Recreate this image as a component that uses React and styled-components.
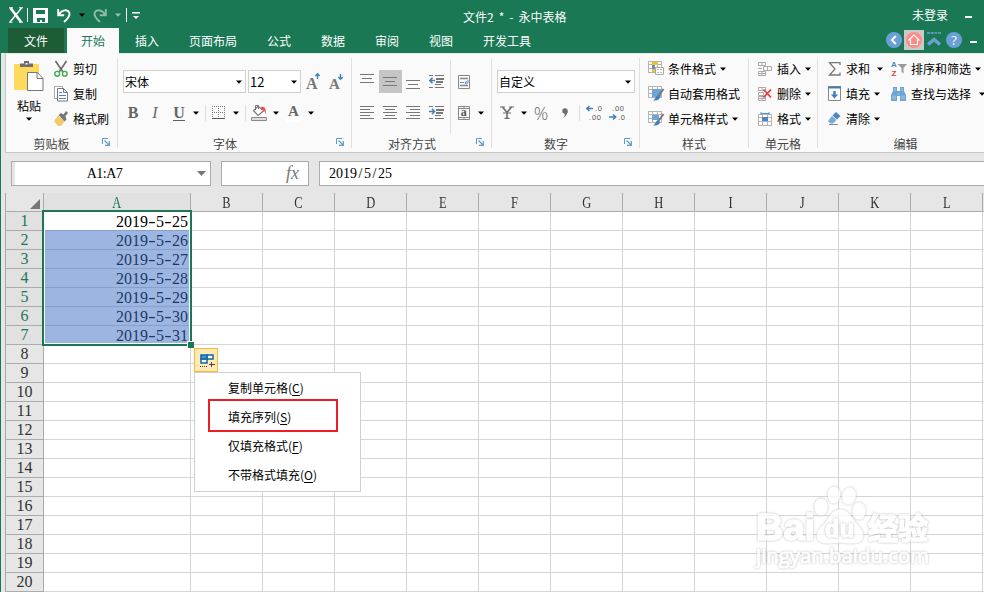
import React from 'react';
import styled, { createGlobalStyle } from 'styled-components';

const GREEN = '#1a7855';
const COLS = ['A', 'B', 'C', 'D', 'E', 'F', 'G', 'H', 'I', 'J', 'K', 'L'];
const TABS = ['插入', '页面布局', '公式', '数据', '审阅', '视图', '开发工具'];
const ROWS = Array.from({ length: 20 }, (_, i) => i + 1);
const MENU = [
    ['复制单元格', 'C'],
    ['填充序列', 'S'],
    ['仅填充格式', 'F'],
    ['不带格式填充', 'O'],
];

const GlobalStyle = createGlobalStyle`
    * { box-sizing: border-box; }
    body {
        margin: 0;
        overflow: hidden;
        font-family: "Noto Sans CJK SC", sans-serif;
        font-size: 12px;
        color: #000;
    }
    svg { display: block; flex: none; overflow: visible; }
`

/* ==============Icons============== */

const Arrow = ({ color = '#000' }) => (
    <svg width="6" height="4" viewBox="0 0 6 4"><path d="M0 .5h6L3 3.8z" fill={color} /></svg>
);

const LogoIcon = () => (
    <svg width="14" height="16" viewBox="0 0 14 16" fill="none" stroke="#fff">
        <path d="M1.5 1L12 15" strokeWidth="2.6" /><path d="M12.5 1L1 15" strokeWidth="1.5" />
        <path d="M0 .8h4M10 .8h4M0 15.2h3.5M10 15.2h4" strokeWidth="1" />
    </svg>
);

const SaveIcon = () => (
    <svg width="15" height="15" viewBox="0 0 15 15">
        <path d="M0 0h15v15H0z" fill="#fff" />
        <path d="M3 2h9v4H3zM4 10h8v4H9v-2H7v2H4z" fill={GREEN} />
    </svg>
);

const UndoIcon = ({ flip, color }) => (
    <svg width="14" height="15" viewBox="0 0 14 15" fill="none" stroke={color} strokeWidth="1.9">
        <g transform={flip ? 'translate(14 0) scale(-1 1)' : undefined}>
            <path d="M1.2 1v6.300h6" /><path d="M1.5 7C5 1.500 10.500 1 12.300 4.500C13.500 8 10.500 11 7 14" />
        </g>
    </svg>
);

const PasteIcon = () => (
    <svg width="30" height="31" viewBox="0 0 30 31">
        <path d="M0 3h25v26H0z" fill="#ffd95c" />
        <path d="M6 6V2.5h4V0h5v2.5h4V6z" fill="#6f6f6f" /><path d="M11.5 2h2v1.5h-2z" fill="#fff" />
        <path d="M13.500 11.500h10l5.500 6v12h-15.500z" fill="#fff" stroke="#777" />
        <path d="M23 11.500v6h6" fill="none" stroke="#777" />
    </svg>
);

const CutIcon = () => (
    <svg width="14" height="16" viewBox="0 0 14 16" fill="none">
        <path d="M1.5 0L9 11M12.5 0L5 11" stroke="#6d6d6d" strokeWidth="1.7" />
        <circle cx="3.2" cy="12.8" r="2.4" stroke="#3fae49" strokeWidth="1.4" />
        <circle cx="10.8" cy="12.8" r="2.4" stroke="#3fae49" strokeWidth="1.4" />
    </svg>
);

const CopyIcon = () => (
    <svg width="14" height="16" viewBox="0 0 14 16">
        <path d="M.5.5h8v12h-8z" fill="#fff" stroke="#aaa" />
        <path d="M3.5 2.5h6l4 4v8.500h-10z" fill="#fff" stroke="#777" />
        <path d="M9.5 2.5v4h4" fill="none" stroke="#777" />
        <path d="M5 6.5h3M5 9.5h7M5 12.5h7" stroke="#4a86c5" />
    </svg>
);

const BrushIcon = () => (
    <svg width="14" height="15" viewBox="0 0 14 15">
        <path d="M0 10l4-5.500 6.500 6-3.500 4.500H4z" fill="#f5c869" />
        <path d="M4.500 4L7 2l2.500 1.500L12 0l2 2-2.500 3 1 3.500-2 2z" fill="#777" />
    </svg>
);

const GrowIcon = ({ down }) => (
    <svg width="14" height="17" viewBox="0 0 14 17">
        <text x="0" y="16" fontFamily="Liberation Serif, serif" fontWeight="bold" fontSize={down ? 15 : 16} fill="#777">A</text>
        <path d={down ? 'M11.500 1v5M9.300 4l2.200 2.300L13.700 4' : 'M11.500 6V1M9.300 3l2.200-2.300L13.700 3'} fill="none" stroke="#3f7fc0" strokeWidth="1.4" />
    </svg>
);

const BorderIcon = () => (
    <svg width="13" height="13" viewBox="0 0 13 13" fill="none" stroke="#777">
        <path d="M0 .5h13M.5 0v12M12.5 0v12M6.5 0v12M0 6.5h13" strokeDasharray="1 1" />
        <path d="M0 12.5h13" stroke="#555" />
    </svg>
);

const BucketIcon = () => (
    <svg width="16" height="17" viewBox="0 0 16 17" fill="none">
        <path d="M7 2.5l6 4-6 5-4.500-5z" fill="#fff" stroke="#777" strokeWidth="1.2" />
        <path d="M4.5 6V1.5h3v3.5" stroke="#777" />
        <path d="M10 3c4-1 5 2 5 8-1-4-2-5-5-5z" fill="#f05050" />
        <path d="M.5 13.5h15v3H.5z" fill="#ddd" stroke="#888" />
    </svg>
);

/* one bar for each [y, x1, x2] */
const Bars = ({ rows }) => (
    <svg width="15" height="15" viewBox="0 0 15 15" stroke="#777">
        {rows.map(([y, a, b]) => <path key={y} d={`M${a} ${y + .5}H${b}`} />)}
    </svg>
);

const IndentIcon = ({ right }) => (
    <svg width="15" height="15" viewBox="0 0 15 15" fill="none">
        <path d="M0 1.5h4M6 1.5h9M6 10.5h6M0 13.5h4M6 13.5h9" stroke="#777" />
        <path d="M7 5h8M7 8h7" stroke="#777" strokeWidth="2" />
        <path d={right ? 'M0 6.5h5M3 3.8l2.500 2.700-2.500 2.700' : 'M6 6.5H1M3.500 3.8L.8 6.500l2.700 2.700'} stroke="#3f7fc0" strokeWidth="1.5" />
    </svg>
);

const WrapIcon = () => (
    <svg width="12" height="14" viewBox="0 0 12 14" fill="none" stroke="#888">
        <path d="M.5.5h11v13H.5z" /><path d="M2 3.5h8M2 10.5h8" strokeWidth="1.5" />
        <path d="M2 7.5h4" stroke="#5b93cc" /><path d="M10 5v3H7M8.500 6.200L6.800 8l1.700 1.500" stroke="#5b93cc" />
    </svg>
);

const MergeIcon = () => (
    <svg width="12" height="14" viewBox="0 0 12 14" fill="none" stroke="#888">
        <path d="M.5.5h11v13H.5zM.5 2.5h11M.5 11.5h11M6 0v2.5M6 11.5V14" />
        <text x="2.8" y="10" fontFamily="Liberation Serif, serif" fontWeight="bold" fontSize="12" fill="#555" stroke="none">a</text>
    </svg>
);

const YenIcon = () => (
    <svg width="14" height="13" viewBox="0 0 14 13" fill="none" stroke="#6d6d6d">
        <path d="M0 1h5M9 1h5" strokeWidth="1.200" />
        <path d="M2.500 1L7 6.500 11.500 1M7 6v6" strokeWidth="1.600" />
        <path d="M3 7h8M4.500 12.300h5" strokeWidth="1.200" />
    </svg>
);

const DecimalIcon = ({ less }) => (
    <svg width="16" height="16" viewBox="0 0 16 16" fontFamily="Liberation Sans, sans-serif" fontSize="7.5" fill="#555">
        <text x={less ? 3 : 9} y="6" textLength={less ? 12 : 7}>{less ? '.00' : '.0'}</text>
        <text x={less ? 9 : 3} y="15" textLength={less ? 7 : 12}>{less ? '.0' : '.00'}</text>
        <path d={less ? 'M0 12h6M4 9.500L6.800 12 4 14.500' : 'M7 3.500H1M3.500 1L.8 3.500l2.700 2.500'} fill="none" stroke="#3f7fc0" strokeWidth="1.5" />
    </svg>
);

const Table = () => (
    <>
        <path d="M0 0h14v12H0z" fill="#fff" />
        <path d="M.5 0v12M4.5 0v12M9.5 0v12M13.5 0v12M0 .5h14M0 3.5h14M0 7.5h14M0 11.5h14" stroke="#b5b5b5" fill="none" />
    </>
);

const CondIcon = () => (
    <svg width="16" height="15" viewBox="0 0 16 15">
        <Table /><path d="M4 1h6v3H4z" fill="#f5c022" /><path d="M4 4h3v4H4z" fill="#5b93cc" /><path d="M4 8h3v3H4z" fill="#f5c022" />
        <path d="M7.5 6.5h8v7h-8z" fill="#fff" stroke="#aaa" /><path d="M9 8.5h2M12 8.5h2M9 11.5h2M12 11.5h2" stroke="#bbb" />
    </svg>
);

const StyleIcon = ({ cell }) => (
    <svg width="16" height="15" viewBox="0 0 16 15">
        <Table /><path d={cell ? 'M4 4h7v5H4z' : 'M4 3h9v8H4z'} fill="#6ea4d6" />
        <path d="M15.5 3L10.500 10" stroke="#777" strokeWidth="2" />
        <path d="M12 10.500c0 3-2.500 4.500-7 4 2.500-1 2.500-4.500 5-5z" fill="#3f7fc0" />
    </svg>
);

const CellsIcon = ({ del }) => (
    <svg width="14" height="14" viewBox="0 0 14 14" fill="#fff" stroke="#aaa">
        <path d="M.5.5h7v3h-7zM.5 9.5h7v4h-7zM.5 11.5h7M4 .5v3M4 9.5v4" />
        {del ? <path d="M.5 5.5h5v3h-5z" /> : <path d="M5.5 4.5h8v4h-8zM9.5 4.5v4M0 6.5h4" />}
        {del && <path d="M5.5 2.5l7.500 8M13 2.5l-7.500 8" stroke="#e8383d" strokeWidth="1.800" />}
    </svg>
);

const FormatIcon = () => (
    <svg width="14" height="14" viewBox="0 0 14 14">
        <g transform="translate(0 2)"><Table /></g>
        <path d="M3 0v3M11 0v3M3 1.5h8" stroke="#5b93cc" /><path d="M4 5h6v4H4z" fill="#4a86c5" />
    </svg>
);

const SumIcon = () => (
    <svg width="13" height="14" viewBox="0 0 13 14" fill="none" stroke="#777" strokeWidth="1.3">
        <path d="M12 3V.7H1.500L7 7l-5.500 6H12v-2.500" />
    </svg>
);

const FillIcon = () => (
    <svg width="13" height="15" viewBox="0 0 13 15" fill="none">
        <path d="M.5.5h12v14H.5z" fill="#fff" stroke="#888" /><path d="M0 1.5h13" stroke="#3f7fc0" strokeWidth="2" />
        <path d="M6.5 5v5" stroke="#3f7fc0" strokeWidth="2.4" /><path d="M2.8 8.5h7.400L6.500 12.500z" fill="#3f7fc0" />
    </svg>
);

const EraserIcon = () => (
    <svg width="13" height="13" viewBox="0 0 13 13">
        <path d="M8 0l4.500 4L9 7.500 4.500 3.500z" fill="#4a86c5" /><path d="M4 4l4.500 4L5 11.500H2.500L0 9z" fill="#76a8da" />
        <path d="M1 12.5h9" stroke="#888" />
    </svg>
);

const SortIcon = () => (
    <svg width="16" height="15" viewBox="0 0 16 15">
        <g fontFamily="Liberation Sans, sans-serif" fontWeight="bold" fontSize="8">
            <text x="0" y="6" fill="#4a86c5">A</text><text x=".5" y="15" fill="#e8383d">Z</text>
        </g>
        <path d="M6.500 3h9.500L12.500 7v5.500l-2-1.500v-4z" fill="#9a9a9a" />
    </svg>
);

const FindIcon = () => (
    <svg width="15" height="14" viewBox="0 0 15 14">
        <path d="M2 0h4v4h3V0h4v4l2 4v6H9V9H6v5H0V8l2-4z" fill="#6ea4d6" />
        <path d="M4 1v3M11 1v3M2 12.500v-4M4 12.500v-4M11 12.500v-4M13 12.500v-4M6.500 7h2" stroke="#d4e4f3" fill="none" strokeWidth=".6" />
    </svg>
);

const LaunchIcon = () => (
    <svg width="8" height="8" viewBox="0 0 8 8" fill="none" stroke="#5b9bd0">
        <path d="M.5 6V.5H6" /><path d="M2.5 2.5l4.500 4.500M7.300 3v4.300H3" strokeWidth="1.200" />
    </svg>
);

const FillOptionsIcon = () => (
    <svg width="15" height="14" viewBox="0 0 15 14" fill="none">
        <path d="M7 1h6v4H7zM1 5h6v4H1z" fill="#fff" stroke="#0f68a8" strokeWidth="1.500" />
        <path d="M1 1h6v4H1z" fill="#4d92c4" stroke="#0f68a8" strokeWidth="1.500" />
        <path d="M0 12.5h8" stroke="#444" strokeDasharray="1 1" /><path d="M9 10.5h6M11.500 8v5" stroke="#444" />
    </svg>
);

/* ==============Small parts============== */

const ToolButton = ({ icon, text, arrow, gap = 4, iconW = 15 }) => (
    <Tool>
        <IconBox $w={iconW}>{icon}</IconBox>
        <span>{text}</span>
        {arrow && <ArrowBox $gap={gap}><Arrow /></ArrowBox>}
    </Tool>
);

const RibbonGroup = ({ width, title, space = 0, launch, children }) => (
    <Group $w={width}>
        <GroupBody>{children}</GroupBody>
        <GroupTitle $space={space}>
            {title}
            {launch && <Launch><LaunchIcon /></Launch>}
        </GroupTitle>
    </Group>
);

// separators take the same advance as a digit
const DateText = ({ value, step }) => (
    <>
        {value.split(/([-/])/).map((part, i) => (
            i % 2 ? <Sep key={i} $w={step} $wide={part === '-'}>{part}</Sep> : part
        ))}
    </>
);

const Watermark = () => (
    <MarkBox>
        <svg width="180" height="90" viewBox="0 0 180 90" fill="#fff" stroke="#fff" strokeWidth="1.6" strokeLinejoin="round">
            <g fontFamily="Liberation Sans, sans-serif" fontWeight="bold">
                <text x="2" y="55" fontSize="37" textLength="59" lengthAdjust="spacingAndGlyphs">Bai</text>
                <ellipse cx="67" cy="22" rx="6" ry="8" /><ellipse cx="80" cy="10" rx="5.500" ry="8" />
                <ellipse cx="95" cy="11" rx="6" ry="8" transform="rotate(15 95 11)" /><ellipse cx="105" cy="26" rx="6" ry="8" />
                <path d="M86 25c8 0 11 8 16 14 5 5 8 9 6 14-3 7-12 4-22 4s-18 3-22-3c-2-6 2-11 7-15 5-6 7-14 15-14z" />
                <text x="71" y="52" fontSize="23" textLength="29">du</text>
            </g>
            <text x="114" y="54" fontSize="30" fontWeight="bold" fontFamily="Noto Sans CJK SC, sans-serif">经验</text>
            <text x="2" y="78" fontSize="20" strokeWidth="1" fontFamily="Open Sans, sans-serif" textLength="173" lengthAdjust="spacingAndGlyphs">jingyan.baidu.com</text>
        </svg>
    </MarkBox>
);

const App = () => {
    return (
        <Window>
            <GlobalStyle />

            {/* ==============Title============== */}
            <TitleBar>
                <QuickAccess>
                    <LogoIcon /><QuickLine /><SaveIcon />
                    <QuickItem $gap={9}><UndoIcon color="#fff" /></QuickItem>
                    <QuickItem $gap={8}><Arrow /></QuickItem>
                    <QuickItem $gap={8}><UndoIcon flip color="#8fb9a9" /></QuickItem>
                    <QuickItem $gap={8}><Arrow color="#a9bdb5" /></QuickItem>
                    <QuickItem $gap={1}><QuickLine /></QuickItem>
                    <svg width="8" height="7" viewBox="0 0 8 7"><path d="M0 0h8v1.5H0zM1 4h6L4 7z" fill="#fff" /></svg>
                </QuickAccess>
                <Title>文件2 * - 永中表格</Title>
                <Account>未登录<Minus /></Account>
            </TitleBar>

            {/* ==============Tabs============== */}
            <TabBar>
                <FileTab>文件</FileTab>
                <ActiveTab>开始</ActiveTab>
                {TABS.map((t) => <Tab key={t}>{t}</Tab>)}
                <TabTools>
                    <svg width="16" height="16" viewBox="0 0 16 16">
                        <circle cx="8" cy="8" r="8" fill="#6ba0d6" /><path d="M9.8 4L6 8l3.800 4" fill="none" stroke="#fff" strokeWidth="2" />
                    </svg>
                    <HomeBox>
                        <svg width="16" height="16" viewBox="0 0 16 16">
                            <circle cx="8" cy="8" r="8" fill="#ff8a8a" />
                            <path d="M2.8 8L8 3l5.200 5H11.500v4.500h-7V8z" fill="none" stroke="#fff" strokeWidth="1.100" />
                        </svg>
                    </HomeBox>
                    <svg width="14" height="16" viewBox="0 0 14 16" fill="none" stroke="#6ba0d6">
                        <path d="M0 1h14" strokeWidth="1.5" strokeDasharray="3 .7" /><path d="M1 12.500L7 7.500l6 5" strokeWidth="3.500" />
                    </svg>
                    <HelpDot>?</HelpDot>
                    <Minus $low />
                </TabTools>
            </TabBar>

            {/* ==============Ribbon============== */}
            <Ribbon>
                <RibbonGroup width={112} title="剪贴板" space={20} launch>
                    <PasteButton><PasteIcon /><PasteText>粘贴</PasteText><Arrow /></PasteButton>
                    <Stack $gap={8}>
                        <ToolButton icon={<CutIcon />} text="剪切" iconW={19} />
                        <ToolButton icon={<CopyIcon />} text="复制" iconW={19} />
                        <ToolButton icon={<BrushIcon />} text="格式刷" iconW={19} />
                    </Stack>
                </RibbonGroup>

                <RibbonGroup width={234} title="字体" space={19} launch>
                    <Lines $left={5}>
                        <Line>
                            <Select $w={123}>宋体<Arrow /></Select>
                            <Select $w={53} $ml={2} $big>12<Arrow /></Select>
                            <Slot $w={24}><GrowIcon /></Slot>
                            <Slot $w={22}><GrowIcon down /></Slot>
                        </Line>
                        <Line>
                            <Slot $w={20}><Letter>B</Letter></Slot>
                            <Slot $w={24}><Letter $italic>I</Letter></Slot>
                            <Slot $w={24}><Letter $under>U</Letter></Slot>
                            <Slot $w={10}><Arrow /></Slot>
                            <Slot $w={8}><Divider $h={16} /></Slot>
                            <Slot $w={19}><BorderIcon /></Slot>
                            <Slot $w={16}><Arrow /></Slot>
                            <Slot $w={3}><Divider $h={16} /></Slot>
                            <Slot $w={24}><BucketIcon /></Slot>
                            <Slot $w={10}><Arrow /></Slot>
                            <Slot $w={25}><Letter $bar>A</Letter></Slot>
                            <Slot $w={10}><Arrow /></Slot>
                        </Line>
                    </Lines>
                </RibbonGroup>

                <RibbonGroup width={140} title="对齐方式" space={19} launch>
                    <Lines $left={4}>
                        <Line>
                            <Slot $w={23}><Bars rows={[[0, 0, 14], [4, 2, 12], [8, 0, 14]]} /></Slot>
                            <Slot $w={23} $on><Bars rows={[[3, 0, 14], [7, 2, 12], [11, 0, 14]]} /></Slot>
                            <Slot $w={23}><Bars rows={[[6, 0, 14], [10, 2, 12], [14, 0, 14]]} /></Slot>
                            <Slot $w={22}><IndentIcon /></Slot>
                        </Line>
                        <Line>
                            <Slot $w={23}><Bars rows={[[1, 0, 14], [4, 0, 10], [7, 0, 14], [10, 0, 10], [13, 0, 14]]} /></Slot>
                            <Slot $w={23}><Bars rows={[[1, 0, 14], [4, 2, 12], [7, 0, 14], [10, 2, 12], [13, 0, 14]]} /></Slot>
                            <Slot $w={23}><Bars rows={[[1, 0, 14], [4, 4, 14], [7, 0, 14], [10, 4, 14], [13, 0, 14]]} /></Slot>
                            <Slot $w={22}><IndentIcon right /></Slot>
                        </Line>
                    </Lines>
                    <TallDivider />
                    <Lines $left={1}>
                        <Line><Slot $w={24}><WrapIcon /></Slot></Line>
                        <Line><Slot $w={24}><MergeIcon /></Slot><Slot $w={10}><Arrow /></Slot></Line>
                    </Lines>
                </RibbonGroup>

                <RibbonGroup width={148} title="数字" space={19} launch>
                    <Lines $left={5}>
                        <Line><Select $w={138}>自定义<Arrow /></Select></Line>
                        <Line>
                            <Slot $w={20}><YenIcon /></Slot>
                            <Slot $w={14}><Arrow /></Slot>
                            <Slot $w={20}><Percent>%</Percent></Slot>
                            <Slot $w={28}>
                                <svg width="6" height="10" viewBox="0 0 6 10"><circle cx="3" cy="3" r="2.7" fill="#6d6d6d" /><path d="M5.7 3c0 3-2 5.500-4.700 7 2-2.500 2-3 1.500-5z" fill="#6d6d6d" /></svg>
                            </Slot>
                            <Divider $h={16} />
                            <Slot $w={27}><DecimalIcon /></Slot>
                            <Slot $w={19}><DecimalIcon less /></Slot>
                        </Line>
                    </Lines>
                </RibbonGroup>

                <RibbonGroup width={109} title="样式">
                    <Stack $gap={8}>
                        <ToolButton icon={<CondIcon />} text="条件格式" iconW={20} arrow />
                        <ToolButton icon={<StyleIcon />} text="自动套用格式" iconW={20} />
                        <ToolButton icon={<StyleIcon cell />} text="单元格样式" iconW={20} arrow />
                    </Stack>
                </RibbonGroup>

                <RibbonGroup width={69} title="单元格">
                    <Stack $gap={9}>
                        <ToolButton icon={<CellsIcon />} text="插入" iconW={19} arrow />
                        <ToolButton icon={<CellsIcon del />} text="删除" iconW={19} arrow />
                        <ToolButton icon={<FormatIcon />} text="格式" iconW={19} arrow />
                    </Stack>
                </RibbonGroup>

                <RibbonGroup width={176} title="编辑">
                    <Stack $gap={10}>
                        <ToolButton icon={<SumIcon />} text="求和" iconW={18} arrow gap={7} />
                        <ToolButton icon={<FillIcon />} text="填充" iconW={18} arrow />
                        <ToolButton icon={<EraserIcon />} text="清除" iconW={18} arrow />
                    </Stack>
                    <Stack $gap={8}>
                        <ToolButton icon={<SortIcon />} text="排序和筛选" iconW={20} arrow />
                        <ToolButton icon={<FindIcon />} text="查找与选择" iconW={20} arrow gap={8} />
                    </Stack>
                </RibbonGroup>
            </Ribbon>

            {/* ==============Formula============== */}
            <FormulaBar>
                <NameBox>
                    <NameText>A1:A7</NameText>
                    <svg width="9" height="5" viewBox="0 0 9 5"><path d="M0 0h9L4.500 5z" fill="#777" /></svg>
                </NameBox>
                <FxBox>fx</FxBox>
                <FormulaInput><DateText value="2019/5/25" step={7} /></FormulaInput>
            </FormulaBar>

            {/* ==============Sheet============== */}
            <Sheet>
                <Corner><svg width="10" height="10" viewBox="0 0 10 10"><path d="M10 0v10H0z" fill="#777" /></svg></Corner>
                {COLS.map((c, i) => <ColHead key={c} $on={i === 0}><span>{c}</span></ColHead>)}
                <Spare $head />
                {ROWS.map((r) => (
                    <React.Fragment key={r}>
                        <RowHead $on={r <= 7}>{r}</RowHead>
                        {COLS.map((c, i) => (
                            <Cell key={c}>{i === 0 && r <= 7 && <DateText value={`2019-5-${24 + r}`} step={8} />}</Cell>
                        ))}
                        <Spare />
                    </React.Fragment>
                ))}
                <Selection><Shade /><Handle /></Selection>
            </Sheet>

            <FillOptions>
                <FillButton><FillOptionsIcon /></FillButton>
                <FillMenu>
                    {MENU.map(([text, key]) => <MenuItem key={key}>{text}(<u>{key}</u>)</MenuItem>)}
                    <RedFrame />
                </FillMenu>
            </FillOptions>
            <Watermark />
        </Window>
    );
}

const Window = styled.div`
    position: relative;
    width: 984px;
    height: 592px;
    overflow: hidden;
    background: #e6e6e6;
    border-left: 1px solid ${GREEN};
    line-height: 16px;
`

const TitleBar = styled.div`
    height: 28px;
    display: grid;
    grid-template-columns: 462px 1fr 73px;
    align-items: center;
    padding-top: 2px;
    background: ${GREEN};
    color: #fff;
`

const QuickAccess = styled.div`
    display: flex;
    align-items: center;
    padding-left: 8px;
`

const QuickLine = styled.div`
    width: 1px;
    height: 14px;
    margin: 0 5px 0 4px;
    background: #fff;
`

const QuickItem = styled.div`
    margin-left: ${(p) => p.$gap}px;
`

const Title = styled.div`
    padding-top: 3px;
    white-space: pre;
    word-spacing: 2.3px;
`

const Account = styled.div`
    display: flex;
    align-items: center;
    padding-left: 1px;
`

const Minus = styled.div`
    width: 7px;
    height: 2px;
    background: #fff;
    margin: ${(p) => (p.$low ? '4px 0 0 8px' : '4px 0 0 17px')};
`

const TabBar = styled.div`
    height: 25px;
    display: flex;
    padding-left: 7px;
    background: ${GREEN};
    color: #fff;
`

const Tab = styled.div`
    padding: 5px 15px 0;
    height: 25px;
`

const FileTab = styled(Tab)`
    width: 56px;
    padding: 5px 16px 0;
    background: #1e5c36;
`

const ActiveTab = styled(Tab)`
    width: 52px;
    height: 26px;
    padding: 5px 14px 0;
    margin: 0 1px 0 3px;
    background: #fafafa;
    color: ${GREEN};
    z-index: 1;
`

const TabTools = styled.div`
    flex: 1;
    display: flex;
    align-items: center;
    justify-content: flex-end;
    padding: 0 7px 2px 0;
`

const HomeBox = styled.div`
    padding: 2px;
    margin: 0 3px 0 2px;
    background: #c9c9c9;
`

const HelpDot = styled.div`
    width: 16px;
    height: 16px;
    margin-left: 5px;
    border-radius: 50%;
    background: #6ba0d6;
    font: 13px/16px "Open Sans", sans-serif;
    text-align: center;
`

const Ribbon = styled.div`
    display: flex;
    width: 990px;
    height: 100px;
    margin-left: 4px;
    border: 1px solid #c6c6c6;
    border-top-color: #e8e8e8;
    background: #fafafa;
`

const Group = styled.div`
    flex: none;
    width: ${(p) => p.$w}px;
    height: 90px;
    margin-top: 4px;
    border-right: 1px solid #e0e0e0;
`

const GroupBody = styled.div`
    display: flex;
    height: 76px;
`

const GroupTitle = styled.div`
    position: relative;
    height: 16px;
    padding: 2px ${(p) => p.$space}px 0 0;
    text-align: center;
    color: #444;
`

const Launch = styled.div`
    position: absolute;
    right: 7px;
    top: 4px;
`

const PasteButton = styled.div`
    width: 40px;
    padding: 3px 0 0 8px;
    display: flex;
    flex-direction: column;

    > svg:last-child { margin: 3px 0 0 12px; }
`

const PasteText = styled.span`
    margin: 6px 0 0 3px;
`

const Stack = styled.div`
    padding-left: ${(p) => p.$gap}px;
    margin-top: -2px;
`

const Tool = styled.div`
    height: 25px;
    display: flex;
    align-items: center;
    white-space: nowrap;
`

const IconBox = styled.div`
    width: ${(p) => p.$w}px;
`

const ArrowBox = styled.div`
    margin-left: ${(p) => p.$gap}px;
`

const Lines = styled.div`
    padding: 12px 0 0 ${(p) => p.$left}px;
`

const Line = styled.div`
    height: 23px;
    margin-bottom: 8px;
    display: flex;
    align-items: center;
`

const Slot = styled.div`
    width: ${(p) => p.$w}px;
    height: 23px;
    display: flex;
    align-items: center;
    justify-content: center;
    background: ${(p) => (p.$on ? '#c5c5c5' : 'none')};
`

const Select = styled.div`
    width: ${(p) => p.$w}px;
    height: 23px;
    margin-left: ${(p) => p.$ml || 0}px;
    padding: 0 3px 0 1px;
    display: flex;
    align-items: center;
    justify-content: space-between;
    border: 1px solid #d0d0d0;
    background: #fff;
    font-size: ${(p) => (p.$big ? 13 : 12)}px;
`

const Letter = styled.span`
    font-family: "Liberation Serif", serif;
    font-size: ${(p) => (p.$bar ? 15 : 16)}px;
    line-height: 15px;
    font-weight: ${(p) => (p.$italic ? 'normal' : 'bold')};
    font-style: ${(p) => (p.$italic ? 'italic' : 'normal')};
    color: #666;
    border-bottom: ${(p) => (p.$under ? '1px solid #5f5f5f' : p.$bar ? '3px solid #fff' : 'none')};
    padding: 0 ${(p) => (p.$bar ? 2 : 0)}px;
`

const Percent = styled.span`
    font: 300 18px/20px "Open Sans", sans-serif;
    color: #666;
`

const Divider = styled.div`
    width: 1px;
    height: ${(p) => p.$h}px;
    background: #ddd;
`

const TallDivider = styled.div`
    width: 1px;
    height: 74px;
    margin: 2px 0 0 3px;
    background: #e0e0e0;
`

const FormulaBar = styled.div`
    height: 40px;
    padding: 8px 0 0 10px;
    display: flex;
    font: 14px/16px "Liberation Serif", serif;
`

const NameBox = styled.div`
    width: 200px;
    height: 25px;
    padding-right: 4px;
    display: flex;
    align-items: center;
    border: 1px solid #ababab;
    box-shadow: inset 3px 0 #e6e6e6;
    background: #fff;
`

const NameText = styled.span`
    flex: 1;
    text-align: center;
    letter-spacing: -.5px;
`

const FxBox = styled.div`
    width: 88px;
    height: 25px;
    margin: 0 10px;
    padding: 3px 9px 0;
    border: 1px solid #ababab;
    background: #fff;
    color: #777;
    font-size: 18px;
    font-style: italic;
    text-align: right;
`

const FormulaInput = styled.div`
    flex: 1;
    height: 25px;
    padding: 4px 9px 0;
    border: 1px solid #ababab;
    border-right: 0;
    background: #fff;
`

const Sep = styled.span`
    display: inline-block;
    width: ${(p) => p.$w}px;
    text-align: center;
    transform: ${(p) => (p.$wide ? 'scaleX(1.4)' : 'none')};
`

const Sheet = styled.div`
    position: relative;
    display: grid;
    grid-template-columns: 38px 147px repeat(11, 72px) 8px;
    grid-template-rows: 19px repeat(20, 19px);
    width: 985px;
    margin-left: 4px;
    border-left: 1px solid #ababab;
    background: #fff;
    font: 16px/18px "Liberation Serif", serif;
`

const Corner = styled.div`
    display: flex;
    justify-content: flex-end;
    align-items: center;
    padding: 3px 3px 0 0;
    border-right: 1px solid #ababab;
    border-bottom: 1px solid #ababab;
    background: #e6e6e6;
`

const ColHead = styled.div`
    text-align: center;
    padding-top: 1px;
    background: ${(p) => (p.$on ? '#e1e1e1' : '#e6e6e6')};
    border-right: 1px solid #ababab;
    border-bottom: 1px solid #ababab;
    color: ${(p) => (p.$on ? GREEN : '#333')};

    span {
        display: inline-block;
        transform: scaleX(.78);
    }
`

const RowHead = styled.div`
    text-align: center;
    background: ${(p) => (p.$on ? '#e1e1e1' : '#e6e6e6')};
    border-right: 1px solid #ababab;
    border-bottom: 1px solid #ababab;
    color: ${(p) => (p.$on ? GREEN : '#333')};
`

const Cell = styled.div`
    padding: 1px 2px 0 0;
    text-align: right;
    border-right: 1px solid #d4d4d4;
    border-bottom: 1px solid #d4d4d4;
`

const Spare = styled.div`
    background: ${(p) => (p.$head ? '#e6e6e6' : '#fff')};
    border-bottom: 1px solid ${(p) => (p.$head ? '#ababab' : '#d4d4d4')};
`

const Selection = styled.div`
    position: absolute;
    left: 36px;
    top: 17px;
    width: 150px;
    height: 136px;
    border: 2px solid ${GREEN};
    box-shadow: inset 0 0 0 1px #fff;
`

const Shade = styled.div`
    position: absolute;
    left: 1px;
    right: 1px;
    top: 18px;
    bottom: 1px;
    background: rgba(59, 109, 195, .5);
`

const Handle = styled.div`
    position: absolute;
    right: -4px;
    bottom: -4px;
    width: 7px;
    height: 7px;
    background: ${GREEN};
    border: solid #fff;
    border-width: 1px 0 0 1px;
`

const FillOptions = styled.div`
    position: absolute;
    left: 193px;
    top: 348px;
`

const FillButton = styled.div`
    width: 24px;
    height: 24px;
    padding: 5px 0 0 5px;
    border: 1px solid #fdb92e;
    background: #ffeab8;
`

const FillMenu = styled.div`
    position: relative;
    width: 167px;
    height: 120px;
    border: 1px solid #d0d0d0;
    background: #fff;
`

const MenuItem = styled.div`
    height: 29px;
    line-height: 29px;
    padding-left: 33px;

    u { text-underline-offset: 2px; }
`

const RedFrame = styled.div`
    position: absolute;
    left: 13px;
    top: 26px;
    width: 130px;
    height: 33px;
    border: 2px solid #ee1c25;
`

const MarkBox = styled.div`
    position: absolute;
    left: 753px;
    top: 485px;
    opacity: .8;

    text, ellipse, path { filter: drop-shadow(0 0 1px #aaa); }
`

export default App
